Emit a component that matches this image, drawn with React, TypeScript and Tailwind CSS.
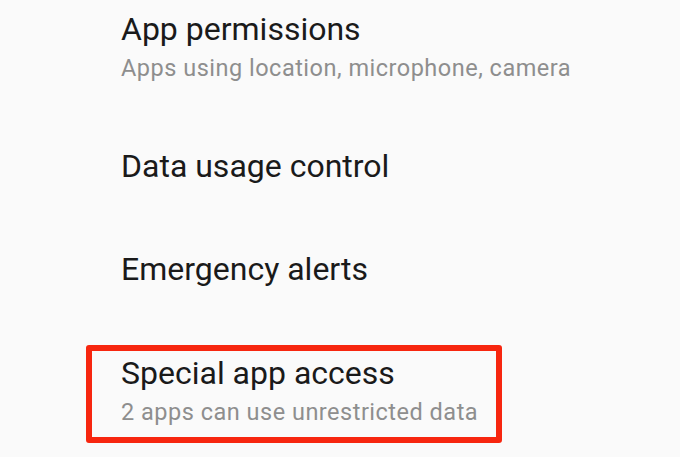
const ITEMS = [
  { title: "App permissions", summary: "Apps using location, microphone, camera" },
  { title: "Data usage control" },
  { title: "Emergency alerts" },
  { title: "Special app access", summary: "2 apps can use unrestricted data", marked: true },
];

export default function App() {
  return (
    <div
      className="h-[457px] w-[680px] overflow-hidden bg-[#fafafa]"
      style={{ fontFamily: "Roboto, 'Noto Sans', sans-serif" }}
    >
      <ul className="-mt-[22.75px]">
        {ITEMS.map((item) => (
          <li key={item.title} className="relative py-[31.75px] pl-[121px]">
            <div className="text-[32px] leading-[40px] text-[#1a1a1a]">{item.title}</div>
            {item.summary && (
              <div className="mt-[5px] text-[23.5px] leading-[28px] tracking-[0.5px] text-[#8e8e8e]">
                {item.summary}
              </div>
            )}
            {/* red annotation frame drawn over the row */}
            {item.marked && (
              <div className="pointer-events-none absolute left-[86px] top-[24.25px] h-[98px] w-[416px] rounded-[3px] border-[6px] border-[#f7260f]" />
            )}
          </li>
        ))}
      </ul>
    </div>
  );
}
